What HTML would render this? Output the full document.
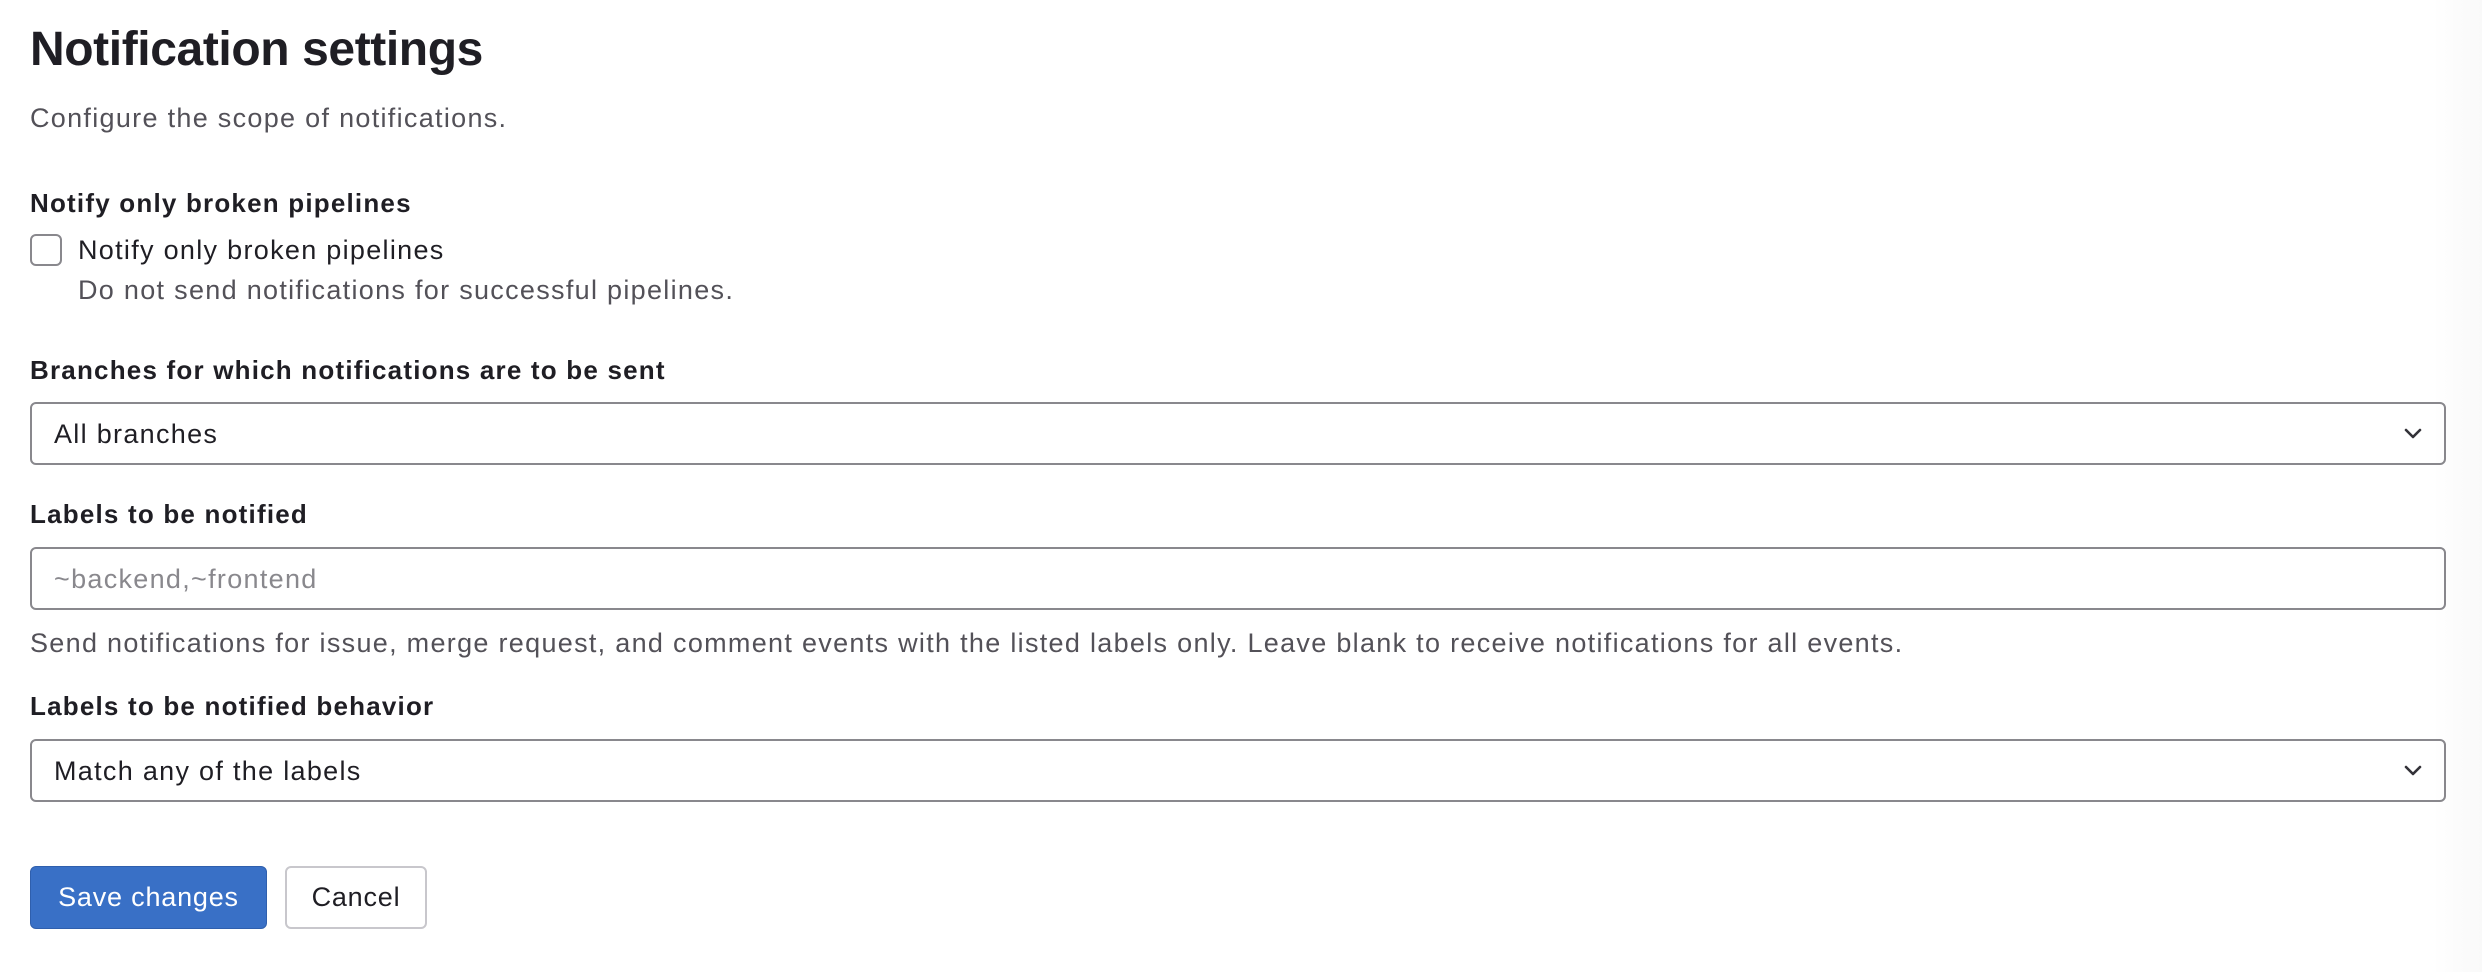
<!DOCTYPE html>
<html><head><meta charset="utf-8"><style>
*{box-sizing:border-box;margin:0;padding:0}
html,body{width:2482px;height:972px;overflow:hidden;background:#fff;font-family:"Liberation Sans",Arial,sans-serif;color:#1f1e24}
.abs{position:absolute;white-space:nowrap}
h1{position:absolute;left:30px;top:20px;font-size:48px;font-weight:bold;letter-spacing:-0.4px;line-height:60px}
.t{font-size:27px;line-height:30px;letter-spacing:1.3px}
.b{font-weight:bold;font-size:26px;letter-spacing:1.2px}
.m{color:#535158}
.box{position:absolute;left:30px;width:2416px;border:2px solid #89888d;border-radius:6px;background:#fff}
.chev{position:absolute;right:22px;top:50%;margin-top:-8px}
.btn{position:absolute;top:866px;height:63px;border-radius:6px;font-size:27px;letter-spacing:0.8px;display:flex;align-items:center;justify-content:center}
.shade{position:absolute;right:0;top:0;width:50px;height:972px;background:linear-gradient(to right,rgba(0,0,0,0),rgba(0,0,0,0.025))}
</style></head><body>
<h1>Notification settings</h1>
<div class="abs t m" style="left:30px;top:103px">Configure the scope of notifications.</div>
<div class="abs t b" style="left:30px;top:188px">Notify only broken pipelines</div>
<div style="position:absolute;left:30px;top:234px;width:32px;height:32px;border:2px solid #89888d;border-radius:6px"></div>
<div class="abs t" style="left:78px;top:235px">Notify only broken pipelines</div>
<div class="abs t m" style="left:78px;top:275px">Do not send notifications for successful pipelines.</div>
<div class="abs t b" style="left:30px;top:355px">Branches for which notifications are to be sent</div>
<div class="box" style="top:402px;height:63px"><div class="abs t" style="left:22px;top:15px">All branches</div>
<svg class="chev" width="18" height="16" viewBox="0 0 18 16"><path d="M2 4l7 7 7-7" fill="none" stroke="#333238" stroke-width="2.6" stroke-linecap="round" stroke-linejoin="round"/></svg></div>
<div class="abs t b" style="left:30px;top:499px">Labels to be notified</div>
<div class="box" style="top:547px;height:63px"><div class="abs t" style="left:22px;top:15px;color:#89888d">~backend,~frontend</div></div>
<div class="abs t m" style="left:30px;top:628px">Send notifications for issue, merge request, and comment events with the listed labels only. Leave blank to receive notifications for all events.</div>
<div class="abs t b" style="left:30px;top:691px">Labels to be notified behavior</div>
<div class="box" style="top:739px;height:63px"><div class="abs t" style="left:22px;top:15px">Match any of the labels</div>
<svg class="chev" width="18" height="16" viewBox="0 0 18 16"><path d="M2 4l7 7 7-7" fill="none" stroke="#333238" stroke-width="2.6" stroke-linecap="round" stroke-linejoin="round"/></svg></div>
<div class="btn" style="left:30px;width:237px;background:#3970c6;color:#fff;border:1px solid #2f5fad">Save changes</div>
<div class="btn" style="left:285px;width:142px;background:#fff;color:#1f1e24;border:2px solid #c8c7cc">Cancel</div>
<div class="shade"></div>
</body></html>
